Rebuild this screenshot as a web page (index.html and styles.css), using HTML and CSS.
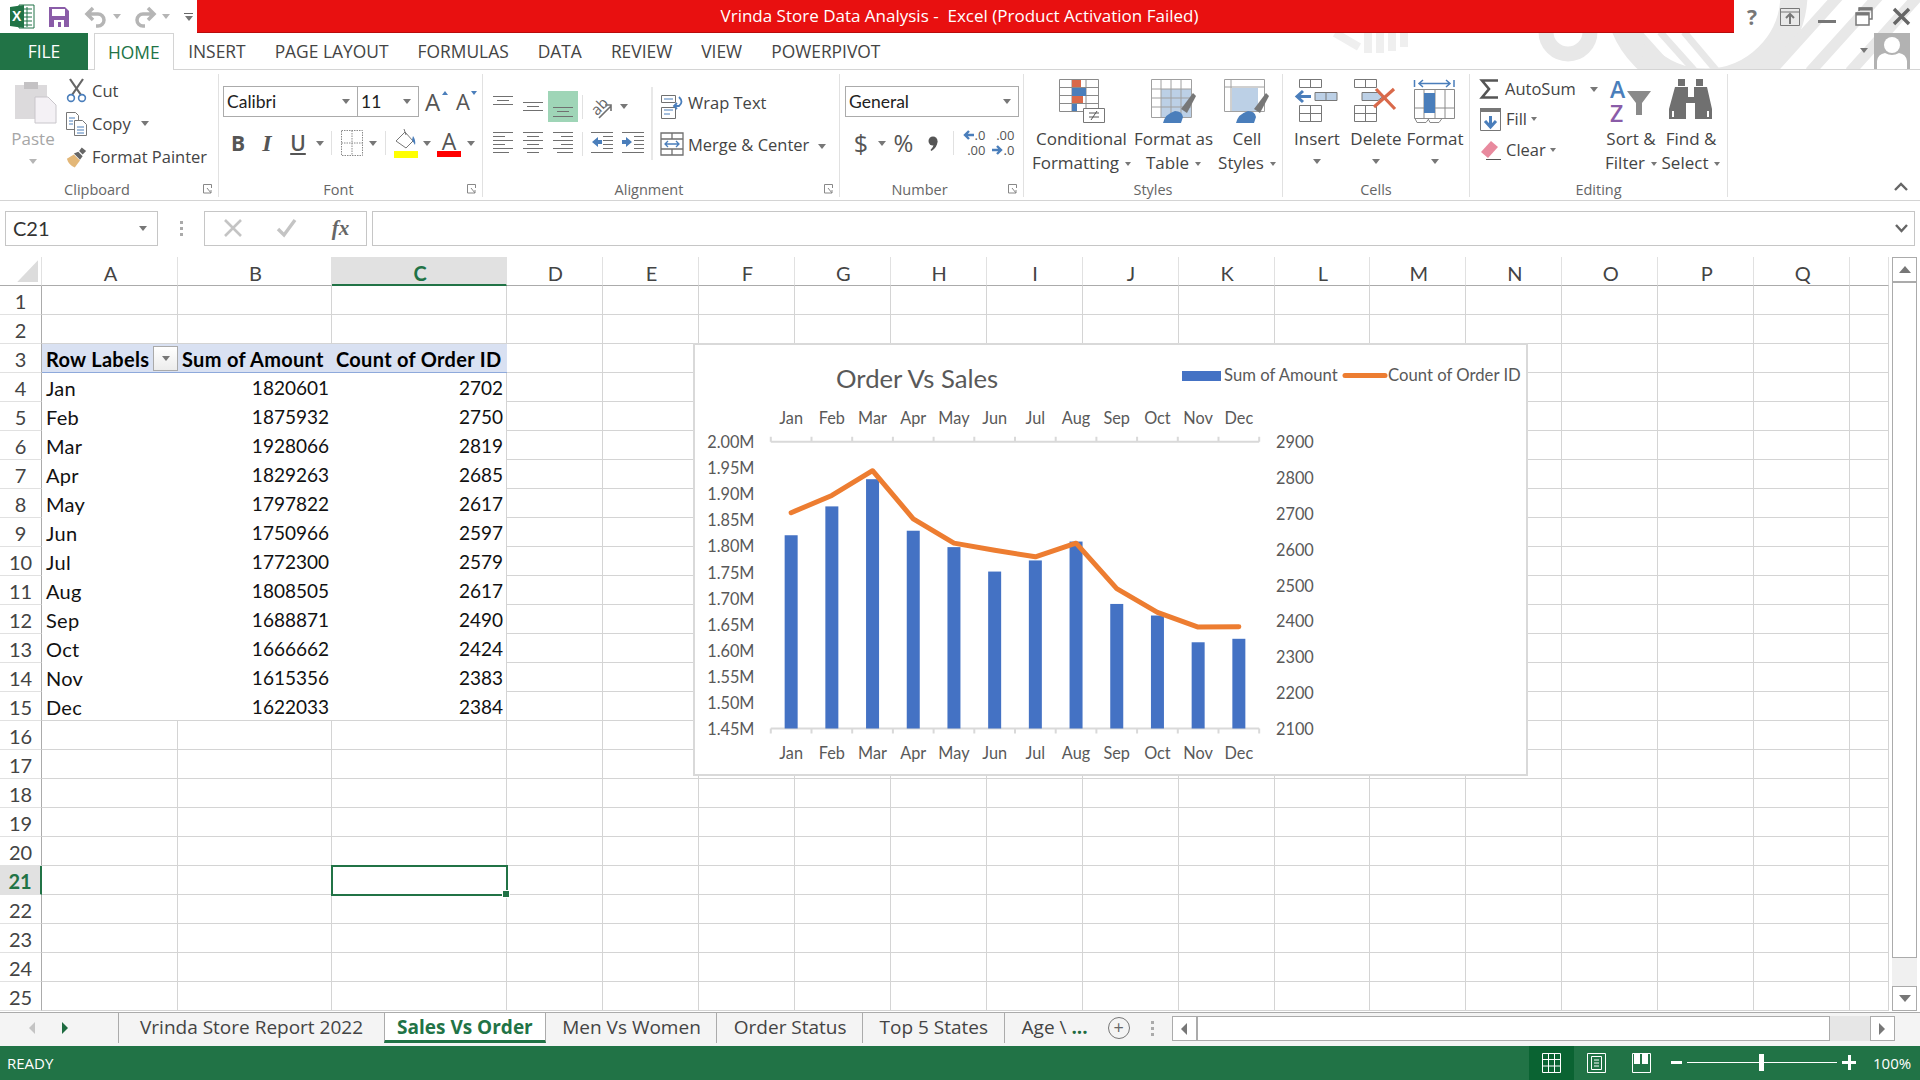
FILE: index.html
```html
<!DOCTYPE html>
<html lang="en">
<head>
    <meta charset="UTF-8">
    <meta name="viewport" content="width=device-width, initial-scale=1.0">
    <title>Vrinda Store Data Analysis - Excel</title>
    <link rel="stylesheet" href="styles.css">
</head>
<body>
    <div class="app">
        <div class="top">
            <!-- office theme pattern behind the window buttons -->
            <svg class="decor" width="590" height="69" viewBox="1330 0 590 69" fill="none" stroke="#e8e8e8">
                <path d="M1335 33l24 14M1368 33v20M1380 33v20M1392 33v18M1404 33v14" stroke="#efefef" stroke-width="8"/>
                <circle cx="1568" cy="32" r="22" stroke-width="15"/>
                <circle cx="1706" cy="-6" r="88" stroke-width="27"/>
                <path d="M1650 70l-34-38M1672 70l-34-38M1694 70l-34-38M1716 70l-32-38" stroke-width="7"/>
                <path d="M1770 72l110-122M1810 72l110-122M1850 72l70-78" stroke-width="11"/>
            </svg>

            <div class="titlebar">
                <div class="qat">
                    <svg width="25" height="25" viewBox="0 0 25 25">
                        <path d="M9 1h15v23H9z" fill="#fff" stroke="#217346"/>
                        <path d="M14 5h8M14 9h8M14 13h8M14 17h8M14 21h8M17 3v20" stroke="#217346"/>
                        <path d="M0 3l14-2v23L0 22z" fill="#217346"/>
                        <text x="2" y="17" class="xl-mark">X</text>
                    </svg>
                    <svg width="20" height="20" viewBox="0 0 20 20">
                        <path d="M0 0h16l4 4v16H0z" fill="#8a5ca8"/>
                        <path d="M3 2h13v7H3z" fill="#fff"/>
                        <path d="M5 13h10v7H5z" fill="#fff"/>
                        <path d="M9 15h3v5H9z" fill="#8a5ca8"/>
                    </svg>
                    <svg class="undo" width="22" height="20" viewBox="0 0 22 20" fill="none" stroke="#b5b5b5" stroke-width="3.5">
                        <path d="M8 1L2 7l6 6M3 7h10a6 6 0 0 1 0 12h-2"/>
                    </svg>
                    <i class="caret pale"></i>
                    <svg class="redo" width="22" height="20" viewBox="0 0 22 20" fill="none" stroke="#b5b5b5" stroke-width="3.5">
                        <path d="M14 1l6 6-6 6M19 7H9a6 6 0 0 0 0 12h2"/>
                    </svg>
                    <i class="caret pale"></i>
                    <div class="qat-more"><span></span><i class="caret"></i></div>
                </div>
                <div class="title-red">Vrinda Store Data Analysis -  Excel (Product Activation Failed)</div>
                <div class="win-buttons">
                    <span class="help">?</span>
                    <svg width="20" height="18" viewBox="0 0 20 18" fill="none" stroke="#777">
                        <path d="M.5.5h19v17H.5zM.5 4h19"/>
                        <path d="M10 16V6M6 10l4-4 4 4" stroke-width="2"/>
                    </svg>
                    <span class="win-min"></span>
                    <svg width="18" height="19" viewBox="0 0 18 19" fill="none" stroke="#777" stroke-width="1.5">
                        <path d="M4 4V1h13v11h-3"/>
                        <path d="M1 6h13v12H1z" fill="#fff"/>
                        <path d="M1 7h13M4 2h13" stroke-width="3"/>
                    </svg>
                    <svg width="17" height="17" viewBox="0 0 17 17" stroke="#666" stroke-width="3.4">
                        <path d="M1 1l15 15M16 1L1 16"/>
                    </svg>
                </div>
            </div>

            <div class="tabs">
                <div class="file-tab">FILE</div>
                <div class="tab active">HOME</div>
                <div class="tab">INSERT</div>
                <div class="tab">PAGE LAYOUT</div>
                <div class="tab">FORMULAS</div>
                <div class="tab">DATA</div>
                <div class="tab">REVIEW</div>
                <div class="tab">VIEW</div>
                <div class="tab">POWERPIVOT</div>
                <div class="user">
                    <i class="caret"></i>
                    <svg width="36" height="36" viewBox="0 0 36 36">
                        <path d="M0 0h36v36H0z" fill="#b2b2b2"/>
                        <circle cx="18" cy="12" r="8" fill="#fff"/>
                        <path d="M3 36v-8q1-7 8-8 7 4 14 0 7 1 8 8v8z" fill="#fff"/>
                    </svg>
                </div>
            </div>
        </div>

        <div class="ribbon">
            <!-- Clipboard -->
            <section class="group g-clip with-launcher">
                <div class="group-body">
                    <div class="big-btn paste">
                        <svg width="42" height="44" viewBox="0 0 42 44">
                            <path d="M0 6h32v34H0z" fill="#dcdadc"/>
                            <path d="M9 3h14v7H9z" fill="#c4c2c4"/>
                            <path d="M20 18h13l8 8v18H20z" fill="#f4f1f5" stroke="#c9c6cb"/>
                        </svg>
                        <span>Paste</span>
                        <i class="caret pale"></i>
                    </div>
                    <div class="clip-list">
                        <div class="clip-row">
                            <svg width="21" height="24" viewBox="0 0 21 24" fill="none">
                                <path d="M4 0l11 16M17 0L6 16" stroke="#666" stroke-width="2.2"/>
                                <circle cx="5" cy="19" r="3.4" stroke="#4a7ebb" stroke-width="1.6"/>
                                <circle cx="16" cy="19" r="3.4" stroke="#4a7ebb" stroke-width="1.6"/>
                            </svg>
                            <span>Cut</span>
                        </div>
                        <div class="clip-row">
                            <svg width="21" height="24" viewBox="0 0 21 24" fill="#fff" stroke="#777">
                                <path d="M.5.5h9l3 3v14H.5z"/>
                                <path d="M8.5 8.5h8l4 4v11h-12z"/>
                                <path d="M3 6h6M3 9h4M3 12h4M11 15h7M11 18h7M11 21h7" stroke="#4a7ebb"/>
                            </svg>
                            <span>Copy</span>
                            <i class="caret copy-caret"></i>
                        </div>
                        <div class="clip-row">
                            <svg width="24" height="24" viewBox="0 0 24 24">
                                <path d="M1 14l8-5 7 7-6 8q-7-3-9-10z" fill="#e3b778"/>
                                <path d="M9 8l7 7 3-4-5-5z" fill="#666"/>
                                <path d="M15 5l3-4 5 4-4 4z" fill="#666"/>
                            </svg>
                            <span>Format Painter</span>
                        </div>
                    </div>
                </div>
                <div class="group-label">Clipboard</div>
                <svg class="launcher" width="9" height="10" viewBox="0 0 9 10" fill="none" stroke="#888"><path d="M8.5 4V.5H.5v8.5H5M4 4l4 5M8 6v3H5" /></svg>
            </section>

            <!-- Font -->
            <section class="group g-font with-launcher">
                <div class="group-body stack">
                    <div class="font-top">
                        <div class="combo font-name"><span>Calibri</span><i class="caret"></i></div>
                        <div class="combo font-size"><span>11</span><i class="caret"></i></div>
                        <span class="grow-a">A<i class="mark-up"></i></span>
                        <span class="shrink-a">A<i class="mark-down"></i></span>
                    </div>
                    <div class="font-tools">
                        <b class="t-bold">B</b>
                        <em class="t-italic">I</em>
                        <u class="t-under">U</u>
                        <i class="caret"></i>
                        <i class="vsep"></i>
                        <svg width="22" height="26" viewBox="0 0 22 26" fill="none" stroke="#8a8a8a" stroke-dasharray="1.5 1">
                            <path d="M.5.5h21v25H.5zM11 .5v25M.5 13h21"/>
                        </svg>
                        <i class="caret"></i>
                        <i class="vsep"></i>
                        <svg width="24" height="30" viewBox="0 0 24 30">
                            <path d="M2 13L11 4l8 9-7 7z" fill="#fff" stroke="#777"/>
                            <path d="M10 1l2 6" stroke="#777"/>
                            <path d="M19 8q3 4 2 9l-3-5z" fill="#4a7ebb"/>
                            <path d="M0 23h24v7H0z" fill="#ffff00"/>
                        </svg>
                        <i class="caret"></i>
                        <span class="font-color">A</span>
                        <i class="caret"></i>
                    </div>
                </div>
                <div class="group-label">Font</div>
                <svg class="launcher" width="9" height="10" viewBox="0 0 9 10" fill="none" stroke="#888"><path d="M8.5 4V.5H.5v8.5H5M4 4l4 5M8 6v3H5" /></svg>
            </section>

            <!-- Alignment -->
            <section class="group g-align with-launcher">
                <div class="group-body stack">
                    <div class="align-row">
                        <svg class="al" width="20" height="31" viewBox="0 0 20 31" stroke="#707070"><path d="M0 5.5h20M4 9.5h12M0 13.5h20"/></svg>
                        <svg class="al" width="20" height="31" viewBox="0 0 20 31" stroke="#707070"><path d="M0 11.5h20M4 15.5h12M0 19.5h20"/></svg>
                        <div class="al-on"><svg width="20" height="31" viewBox="0 0 20 31" stroke="#707070"><path d="M0 16.5h20M4 20.5h12M0 25.5h20"/></svg></div>
                        <i class="vsep"></i>
                        <svg width="22" height="24" viewBox="0 0 22 24" fill="none" stroke="#707070">
                            <text x="0" y="17" class="ab-mark" transform="rotate(-45 8 12)">ab</text>
                            <path d="M8 23L20 11M14 10h6v6" stroke-width="1.6"/>
                        </svg>
                        <i class="caret"></i>
                        <span></span>
                        <i class="vsep wide"></i>
                        <svg width="23" height="24" viewBox="0 0 23 24" fill="none" stroke="#707070">
                            <path d="M.5.5h14v7H.5zM.5 12.5h14v11H.5z" fill="#fff"/>
                            <path d="M3 4h9M3 15h9M3 19h6" stroke="#4a7ebb"/>
                            <path d="M18 2q5 5 0 9h-4M16 8l-3 3 3 3" stroke="#4a7ebb" stroke-width="1.8"/>
                        </svg>
                        <span class="tool-text">Wrap Text</span>
                    </div>
                    <div class="align-row second">
                        <svg width="20" height="26" viewBox="0 0 20 26" stroke="#707070"><path d="M0 1.5h20M0 5.5h12M0 9.5h20M0 13.5h12M0 17.5h20M0 21.5h16"/></svg>
                        <svg width="20" height="26" viewBox="0 0 20 26" stroke="#707070"><path d="M0 1.5h20M4 5.5h12M0 9.5h20M4 13.5h12M0 17.5h20M4 21.5h12"/></svg>
                        <svg width="20" height="26" viewBox="0 0 20 26" stroke="#707070"><path d="M0 1.5h20M8 5.5h12M0 9.5h20M8 13.5h12M0 17.5h20M4 21.5h16"/></svg>
                        <i class="vsep"></i>
                        <svg width="22" height="26" viewBox="0 0 22 26"><path d="M0 1.5h22M12 5.5h10M12 9.5h10M12 13.5h10M12 17.5h10M0 21.5h22" stroke="#707070"/><path d="M1 11l6-5v3h4v4H7v3z" fill="#4a7ebb"/></svg>
                        <svg width="22" height="26" viewBox="0 0 22 26"><path d="M0 1.5h22M12 5.5h10M12 9.5h10M12 13.5h10M12 17.5h10M0 21.5h22" stroke="#707070"/><path d="M10 11L4 6v3H0v4h4v3z" fill="#4a7ebb"/></svg>
                        <i class="vsep wide"></i>
                        <svg width="24" height="24" viewBox="0 0 24 24" fill="none" stroke="#707070">
                            <path d="M1 1h22v22H1zM1 7h22M1 17h22M12 1v6M12 17v6" stroke-width="1.3"/>
                            <path d="M5 12h14M8 9l-3 3 3 3M16 9l3 3-3 3" stroke="#4a7ebb" stroke-width="1.3"/>
                        </svg>
                        <span class="tool-text">Merge &amp; Center<i class="caret merge-caret"></i></span>
                    </div>
                </div>
                <div class="group-label">Alignment</div>
                <svg class="launcher" width="9" height="10" viewBox="0 0 9 10" fill="none" stroke="#888"><path d="M8.5 4V.5H.5v8.5H5M4 4l4 5M8 6v3H5" /></svg>
            </section>

            <!-- Number -->
            <section class="group g-number with-launcher">
                <div class="group-body stack">
                    <div class="combo number-format"><span>General</span><i class="caret"></i></div>
                    <div class="number-tools">
                        <span class="sym dollar">$</span>
                        <i class="caret"></i>
                        <span class="sym">%</span>
                        <svg width="10" height="15" viewBox="0 0 10 15" fill="#555"><circle cx="5" cy="5" r="4.500"/><path d="M9.500 5q0 6-6 10l-1-1q3-3 3-5z"/></svg>
                        <i class="vsep"></i>
                        <div class="decimals">
                            <span><svg class="dec-arrow" width="11" height="10" viewBox="0 0 11 10" fill="none" stroke="#4a7ebb" stroke-width="2.4"><path d="M11 5H2M6 1L2 5l4 4"/></svg>.0</span>
                            <span>.00</span>
                        </div>
                        <div class="decimals">
                            <span>.00</span>
                            <span><svg class="dec-arrow" width="11" height="10" viewBox="0 0 11 10" fill="none" stroke="#4a7ebb" stroke-width="2.4"><path d="M0 5h9M5 1l4 4-4 4"/></svg>.0</span>
                        </div>
                    </div>
                </div>
                <div class="group-label">Number</div>
                <svg class="launcher" width="9" height="10" viewBox="0 0 9 10" fill="none" stroke="#888"><path d="M8.5 4V.5H.5v8.5H5M4 4l4 5M8 6v3H5" /></svg>
            </section>

            <!-- Styles -->
            <section class="group g-styles">
                <div class="group-body">
                    <div class="big-btn b-cond">
                        <svg width="46" height="44" viewBox="0 0 46 44" fill="none" stroke="#8a8a8a">
                            <path d="M.5.5h39v32H.5zM.5 8.5h39M.5 16.5h39M.5 24.5h39M13 .5v32M27 .5v32"/>
                            <path d="M13 1h9v7h-9z" fill="#d9694a" stroke="none"/>
                            <path d="M13 9h14v8H13z" fill="#4a7ebb" stroke="none"/>
                            <path d="M13 17h11v7H13z" fill="#d9694a" stroke="none"/>
                            <path d="M13 25h5v7h-5z" fill="#4a7ebb" stroke="none"/>
                            <path d="M24.5 29.5h21v14h-21z" fill="#fff" stroke="#777"/>
                            <path d="M30 34h10M30 38h10M38 32l-6 9" stroke="#555"/>
                        </svg>
                        <span>Conditional</span>
                        <span>Formatting<i class="caret small"></i></span>
                    </div>
                    <div class="big-btn b-table">
                        <svg width="46" height="44" viewBox="0 0 46 44" fill="none" stroke="#a0a0a0">
                            <path d="M.5.5h40v38H.5z" fill="#fff"/>
                            <path d="M10 10h30v28H10z" fill="#bcd0e6" stroke="none"/>
                            <path d="M.5 10h40M.5 19h40M.5 28h40M10 .5v38M20 .5v38M30 .5v38" />
                            <path d="M30 30l12-16 3 3-9 17z" fill="#777" stroke="none"/>
                            <path d="M12 44q2-9 12-12 7 0 8 6l-2 6z" fill="#4a7ebb" stroke="none"/>
                        </svg>
                        <span>Format as</span>
                        <span>Table<i class="caret small"></i></span>
                    </div>
                    <div class="big-btn b-cell">
                        <svg width="46" height="44" viewBox="0 0 46 44" fill="none" stroke="#a0a0a0">
                            <path d="M.5.5h40v32H.5zM.5 8h40M7 .5v32" fill="#fff"/>
                            <path d="M8 9h26v23H8z" fill="#bcd0e6" stroke="none"/>
                            <path d="M30 30l12-16 3 3-9 17z" fill="#777" stroke="none"/>
                            <path d="M12 44q2-9 12-12 7 0 8 6l-2 6z" fill="#4a7ebb" stroke="none"/>
                        </svg>
                        <span>Cell</span>
                        <span>Styles<i class="caret small"></i></span>
                    </div>
                </div>
                <div class="group-label">Styles</div>
            </section>

            <!-- Cells -->
            <section class="group g-cells">
                <div class="group-body">
                    <div class="big-btn b-insert">
                        <svg width="44" height="44" viewBox="0 0 44 44" fill="none" stroke="#777">
                            <path d="M4.500.5h22v8h-22zM15.500.5v8M4.500 26.500h22v16h-22zM4.500 34.500h22M15.500 26.500v16"/>
                            <path d="M20 13.500h22v8H20z" fill="#bcd0e6"/><path d="M31 13.500v8"/>
                            <path d="M16 17.500H3M8 12l-6 5.500 6 5.500" stroke="#4a7ebb" stroke-width="3"/>
                        </svg>
                        <span>Insert</span>
                        <i class="caret"></i>
                    </div>
                    <div class="big-btn b-delete">
                        <svg width="44" height="44" viewBox="0 0 44 44" fill="none" stroke="#777">
                            <path d="M.5.5h22v8H.5zM11.500.500v8M.5 26.500h22v16H.5zM.5 34.500h22M11.500 26.500v16"/>
                            <path d="M8 13.500h16l5 4-5 4H8z" fill="#bcd0e6"/>
                            <path d="M20 28L40 10M22 10l19 20" stroke="#d9694a" stroke-width="3.2"/>
                        </svg>
                        <span>Delete</span>
                        <i class="caret"></i>
                    </div>
                    <div class="big-btn b-format">
                        <svg width="42" height="44" viewBox="0 0 42 44" fill="none" stroke="#8a8a8a">
                            <path d="M.5 10.500h40v29H.5zM.5 29h40M10 10.500v29M21 10.500v29M31 10.500v29"/>
                            <path d="M10 14h11v20H10z" fill="#4a7ebb" stroke="none"/>
                            <path d="M1 39.500l2 4h9l3-4M14 39.500l2 4h9l3-4"/>
                            <path d="M.5 1v7M40 1v7M5 4.500h31M9 1L5 4.500 9 8M32 1l4 3.500L32 8" stroke="#4a7ebb" stroke-width="1.500"/>
                        </svg>
                        <span>Format</span>
                        <i class="caret"></i>
                    </div>
                </div>
                <div class="group-label">Cells</div>
            </section>

            <!-- Editing -->
            <section class="group g-edit">
                <div class="group-body">
                    <div class="edit-list">
                        <div class="edit-row r-sum">
                            <svg width="18" height="20" viewBox="0 0 18 20" fill="none" stroke="#555" stroke-width="2.6"><path d="M18 1.500H2L9 10l-7 8.500h16"/></svg>
                            <span>AutoSum</span><i class="caret auto-caret"></i>
                        </div>
                        <div class="edit-row r-fill">
                            <svg width="21" height="23" viewBox="0 0 21 23" fill="#fff" stroke="#777">
                                <path d="M.5.500h20v22H.5z"/>
                                <path d="M0 0h21v4H0z" fill="#777" stroke="none"/>
                                <path d="M10.500 8v11M5 13l5.500 6 5.500-6" fill="none" stroke="#4a7ebb" stroke-width="3"/>
                            </svg>
                            <span>Fill</span><i class="caret small"></i>
                        </div>
                        <div class="edit-row r-clear">
                            <svg width="21" height="20" viewBox="0 0 21 20">
                                <path d="M1 12L11 1l7 6-10 11z" fill="#e88a9e"/>
                                <path d="M6 19.500h15" stroke="#555"/>
                            </svg>
                            <span>Clear</span><i class="caret small"></i>
                        </div>
                    </div>
                    <div class="big-btn b-sort">
                        <svg width="44" height="44" viewBox="0 0 44 44">
                            <text x="1" y="19" class="az a">A</text>
                            <text x="1" y="43" class="az z">Z</text>
                            <path d="M18 12h24L33 24v12h-6V24z" fill="#8a8a8a"/>
                        </svg>
                        <span>Sort &amp;</span>
                        <span>Filter<i class="caret small"></i></span>
                    </div>
                    <div class="big-btn b-find">
                        <svg width="44" height="44" viewBox="0 0 44 44" fill="#707070">
                            <path d="M9 0h7v7H9zM27 0h7v7h-7z"/>
                            <path d="M6 8h13v10h6V8h13l5 22v10H26V24h-9v16H0V30z"/>
                            <path d="M3 32h2v6H3zM38 32h2v6h-2z" fill="#fff"/>
                        </svg>
                        <span>Find &amp;</span>
                        <span>Select<i class="caret small"></i></span>
                    </div>
                </div>
                <div class="group-label">Editing</div>
            </section>

            <div class="ribbon-end">
                <svg width="14" height="9" viewBox="0 0 14 9" fill="none" stroke="#666" stroke-width="2.4"><path d="M1 8l6-6 6 6"/></svg>
            </div>
        </div>

        <div class="formula-bar">
            <div class="name-box"><span>C21</span><i class="caret"></i></div>
            <div class="fb-dots"><i></i><i></i><i></i></div>
            <div class="fb-buttons">
                <svg width="18" height="18" viewBox="0 0 18 18" stroke="#c4c4c4" stroke-width="2.6"><path d="M1 1l16 16M17 1L1 17"/></svg>
                <svg width="20" height="18" viewBox="0 0 20 18" fill="none" stroke="#c4c4c4" stroke-width="3.4"><path d="M1 10l6 6L18 1"/></svg>
                <span class="fx">fx</span>
            </div>
            <div class="fb-input">
                <svg width="13" height="9" viewBox="0 0 13 9" fill="none" stroke="#666" stroke-width="2.4"><path d="M1 1l5.500 6L12 1"/></svg>
            </div>
        </div>

        <div class="sheet">
            <div class="grid" id="grid"></div>
            <div class="vscroll">
                <div class="sb-btn"><i class="tri up"></i></div>
                <div class="sb-thumb"></div>
                <div class="sb-track"></div>
                <div class="sb-btn"><i class="tri down"></i></div>
            </div>
            <div class="chart" id="chart"></div>
        </div>

        <div class="sheet-tabs">
            <div class="tab-nav">
                <i class="tri left off"></i>
                <i class="tri right on"></i>
            </div>
            <div class="sheet-tab first">Vrinda Store Report 2022</div>
            <div class="sheet-tab current">Sales Vs Order</div>
            <div class="sheet-tab">Men Vs Women</div>
            <div class="sheet-tab">Order Status</div>
            <div class="sheet-tab">Top 5 States</div>
            <div class="sheet-tab last">Age \ <b>...</b></div>
            <div class="add-sheet">+</div>
            <div class="fb-dots tabs-dots"><i></i><i></i><i></i></div>
            <div class="hscroll">
                <div class="sb-btn h"><i class="tri left"></i></div>
                <div class="hs-thumb"></div>
                <div class="hs-track"></div>
                <div class="sb-btn h"><i class="tri right"></i></div>
            </div>
        </div>

        <div class="statusbar">
            <span class="ready">READY</span>
            <div class="view-btn on">
                <svg width="19" height="20" viewBox="0 0 19 20" fill="none" stroke="#fff"><path d="M.5.500h18v19H.5zM.5 6.500h18M.5 13h18M6.500.500v19M12.500.500v19"/></svg>
            </div>
            <div class="view-btn">
                <svg width="19" height="20" viewBox="0 0 19 20" fill="none" stroke="#fff"><path d="M.5.500h18v19H.5zM4.500 3.500h10v13h-10zM7 7h5M7 10h5M7 13h5"/></svg>
            </div>
            <div class="view-btn">
                <svg width="19" height="20" viewBox="0 0 19 20" fill="none" stroke="#fff"><path d="M.5.500h18v19H.5z"/><path d="M2 1h6v10H2zM10 1h6v10h-6z" fill="#fff" stroke="none"/></svg>
            </div>
            <div class="zoom">
                <span class="zoom-minus"></span>
                <div class="zoom-track"><i></i></div>
                <span class="zoom-plus"></span>
            </div>
            <span class="zoom-val">100%</span>
        </div>
    </div>

    <script src="script.js"></script>
</body>
</html>
```

FILE: styles.css
```css
* {
    box-sizing: border-box;
}

body {
    margin: 0;
    background: #fff;
    font-family: "Open Sans", sans-serif;
    color: #444;
    overflow: hidden;
}

svg {
    overflow: visible;
}

.app {
    width: 1920px;
    height: 1080px;
    display: flex;
    flex-direction: column;
}

.caret {
    display: inline-block;
    width: 0;
    height: 0;
    border-left: 4.5px solid transparent;
    border-right: 4.5px solid transparent;
    border-top: 5px solid #777;
}

.caret.pale {
    border-top-color: #b5b5b5;
}

.caret.small {
    border-left-width: 3.5px;
    border-right-width: 3.5px;
    border-top-width: 4px;
    margin-left: 6px;
    vertical-align: middle;
}

/* title bar */
.top {
    position: relative;
    height: 70px;
}

.decor {
    position: absolute;
    right: 0;
    top: 0;
    overflow: hidden;
}

.titlebar {
    position: relative;
    display: flex;
    height: 33px;
}

.qat {
    width: 197px;
    background: #fff;
    display: flex;
    align-items: center;
    padding-left: 10px;
}

.xl-mark {
    font: bold 14px "Liberation Sans", sans-serif;
    fill: #fff;
}

.qat svg:nth-child(2) {
    margin-left: 14px;
}

.undo {
    margin-left: 16px;
}

.redo {
    margin-left: 13px;
}

.qat .caret {
    margin-left: 6px;
}

.qat-more {
    margin-left: 14px;
    display: flex;
    flex-direction: column;
    gap: 2px;
    align-items: center;
}

.qat-more span {
    width: 9px;
    height: 1px;
    background: #666;
}

.qat-more .caret {
    margin: 0;
}

.title-red {
    width: 1537px;
    background: #e81010;
    border-bottom: 1px solid #b80c0c;
    color: #fff;
    font-size: 17px;
    line-height: 32px;
    text-align: center;
    white-space: pre;
    padding-right: 12px;
}

.win-buttons {
    flex: 1;
    display: flex;
    align-items: center;
    position: relative;
}

.help {
    position: relative;
    margin-left: 13px;
    width: 13px;
    font: bold 21px "Open Sans", sans-serif;
    color: #777;
}

.win-buttons svg:nth-child(2) {
    margin-left: 20px;
}

.win-min {
    width: 18px;
    height: 3px;
    background: #777;
    margin: 10px 0 0 18px;
}

.win-buttons svg:nth-child(4) {
    margin-left: 19px;
}

.win-buttons svg:nth-child(5) {
    margin-left: 20px;
}

/* tabs */
.tabs {
    position: relative;
    display: flex;
    height: 37px;
    border-bottom: 1px solid #d4d4d4;
    font-size: 17.4px;
    line-height: 36px;
}

.file-tab {
    width: 88px;
    height: 37px;
    background: #217346;
    color: #fff;
    text-align: center;
    margin-right: 6px;
}

.tab {
    padding: 0 14.5px;
    color: #444;
    background: transparent;
}

.tab.active {
    height: 37px;
    color: #217346;
    background: #fff;
    border: 1px solid #d4d4d4;
    border-bottom: none;
    padding: 0 13px;
}

.user {
    position: absolute;
    right: 10px;
    top: 0;
    display: flex;
    align-items: flex-start;
}

.user .caret {
    margin: 15px 6px 0 0;
}

/* ribbon */
.ribbon {
    display: flex;
    height: 132px;
    border-bottom: 1px solid #d4d4d4;
    padding-top: 4px;
    font-size: 16.5px;
    color: #444;
}

.group {
    position: relative;
    display: flex;
    flex-direction: column;
    height: 123px;
    border-right: 1px solid #e1e1e1;
}

.group-body {
    display: flex;
    height: 104px;
}

.group-body.stack {
    flex-direction: column;
}

.group-label {
    text-align: center;
    font-size: 14.5px;
    line-height: 23px;
    color: #666;
    height: 19px;
}

.with-launcher .group-label {
    padding-right: 24px;
}

.launcher {
    position: absolute;
    right: 6px;
    bottom: 3px;
}

.g-clip { width: 219px; }
.g-font { width: 264px; }
.g-align { width: 357px; }
.g-number { width: 184px; }
.g-styles { width: 259px; }
.g-cells { width: 187px; }
.g-edit { width: 258px; }

.g-clip .group-body { padding-left: 15px; }
.g-font .group-body { padding-left: 4px; }
.g-align .group-body { padding-left: 5px; }
.g-number .group-body { padding-left: 5px; }
.g-styles .group-body { padding-left: 6px; }
.g-cells .group-body { padding-left: 6px; }
.g-edit .group-body { padding-left: 10px; }

.big-btn {
    display: flex;
    flex-direction: column;
    align-items: center;
    padding-top: 5px;
    line-height: 24px;
    white-space: nowrap;
    font-size: 17px;
}

.big-btn svg {
    margin-bottom: 4px;
    flex: none;
}

.big-btn > .caret {
    margin-top: 8px;
}

.paste {
    width: 42px;
    color: #a6a6a6;
}

.paste span, .paste .caret {
    margin-right: 6px;
}

.clip-list {
    margin-left: 9px;
    display: flex;
    flex-direction: column;
}

.clip-row {
    height: 33px;
    display: flex;
    align-items: center;
    gap: 5px;
    white-space: nowrap;
    width: 150px;
}

.clip-row svg {
    width: 21px;
}

.copy-caret {
    margin-left: 5px;
}

.combo {
    height: 31px;
    border: 1px solid #ababab;
    display: flex;
    align-items: center;
    justify-content: space-between;
    padding: 0 7px 0 3px;
    font: 17.5px "Lato", sans-serif;
    color: #222;
    background: #fff;
}

.font-top {
    display: flex;
    margin-top: 12px;
    height: 31px;
    align-items: center;
}

.font-name {
    width: 135px;
}

.font-size {
    width: 62px;
    margin-left: -1px;
}

.grow-a, .shrink-a {
    position: relative;
    font-size: 24px;
    line-height: 31px;
    color: #555;
}

.grow-a {
    margin-left: 6px;
    width: 31px;
}

.shrink-a {
    font-size: 22px;
}

.mark-up, .mark-down {
    position: absolute;
    top: 5px;
    left: 17px;
    width: 0;
    height: 0;
    border-left: 3.5px solid transparent;
    border-right: 3.5px solid transparent;
}

.mark-up {
    border-bottom: 4px solid #4a7ebb;
}

.mark-down {
    left: 15px;
    border-top: 4px solid #4a7ebb;
}

.font-tools {
    margin: 11px 0 0 3px;
    height: 30px;
    display: grid;
    grid-template-columns: 26px 30px 32px 12px 10px 31px 12px 12px 30px 12px 32px 12px;
    justify-items: center;
    align-items: center;
}

.t-bold, .t-italic, .t-under {
    font-size: 21px;
    color: #555;
    font-family: "Open Sans", sans-serif;
}

.t-bold {
    margin-right: 2px;
}

.t-italic {
    font-family: "Liberation Serif", serif;
    font-size: 24px;
    font-weight: 700;
}

.t-under {
    font-weight: 600;
}

.font-color {
    display: block;
    width: 24px;
    height: 28px;
    text-align: center;
    font-size: 23px;
    line-height: 24px;
    color: #555;
    border-bottom: 6px solid #f00;
}

.vsep {
    display: block;
    width: 1px;
    height: 24px;
    background: #e1e1e1;
}

.align-row {
    display: grid;
    grid-template-columns: 30px 30px 30px 8px 32px 12px 18px 8px 32px auto;
    justify-items: center;
    align-items: center;
    height: 31px;
    margin-top: 11px;
}

.align-row.second {
    grid-template-columns: 30px 30px 30px 8px 32px 30px 8px 32px auto;
    margin-top: 12px;
    height: 30px;
}

.vsep.wide {
    width: 2px;
    height: 41px;
    background: #e8e8e8;
    align-self: start;
    margin-top: 2px;
}

.second .vsep.wide {
    height: 32px;
    margin-top: 0;
}

.align-row .tool-text {
    justify-self: start;
    white-space: nowrap;
    margin-top: -8px;
}

.align-row.second .tool-text {
    margin-top: 0;
}

.al-on {
    width: 30px;
    height: 31px;
    background: #9fd5b7;
    display: flex;
    justify-content: center;
}

.ab-mark {
    font: 15px "Open Sans", sans-serif;
    fill: #666;
    stroke: none;
}

.merge-caret {
    margin-left: 9px;
    vertical-align: middle;
}

.number-format {
    width: 174px;
    margin-top: 12px;
}

.number-tools {
    margin-top: 11px;
    height: 30px;
    display: grid;
    grid-template-columns: 32px 10px 33px 26px 14px 28px 30px;
    justify-items: center;
    align-items: center;
}

.sym {
    font-size: 24px;
    color: #555;
    line-height: 30px;
}

.dollar {
    font-size: 25px;
}

.decimals {
    display: flex;
    flex-direction: column;
    font-size: 13px;
    line-height: 15px;
    color: #555;
    text-align: right;
}

.dec-arrow {
    margin-right: 1px;
}

.b-cond { width: 103px; }
.b-table { width: 81px; }
.b-cell { width: 66px; }
.b-insert { width: 56px; }
.b-delete { width: 62px; }
.b-format { width: 56px; }

.edit-list {
    width: 120px;
    display: flex;
    flex-direction: column;
}

.edit-row {
    display: flex;
    align-items: center;
    gap: 7px;
    white-space: nowrap;
}

.edit-row span {
    margin-top: -2px;
}

.r-sum { height: 30px; }
.r-fill { height: 30px; gap: 5px; }
.r-clear { height: 32px; gap: 5px; }

.edit-row .caret.small {
    margin-left: -1px;
}

.auto-caret {
    margin-left: 7px;
}

.b-sort { width: 62px; }
.b-find { width: 58px; }

.az {
    font: 600 23px "Open Sans", sans-serif;
}

.az.a { fill: #4a7ebb; }
.az.z { fill: #8a5ca8; }

.ribbon-end {
    flex: 1;
    display: flex;
    align-items: flex-end;
    justify-content: flex-end;
    padding: 0 12px 9px 0;
}

/* formula bar */
.formula-bar {
    display: flex;
    height: 46px;
    padding-top: 10px;
    padding-left: 5px;
}

.name-box {
    width: 153px;
    height: 35px;
    border: 1px solid #c6c6c6;
    display: flex;
    align-items: center;
    justify-content: space-between;
    padding: 0 10px 0 7px;
    font: 20px "Lato", sans-serif;
    color: #333;
}

.fb-dots {
    width: 46px;
    display: flex;
    flex-direction: column;
    align-items: center;
    justify-content: center;
    gap: 3px;
}

.fb-dots i {
    width: 3px;
    height: 3px;
    background: #aaa;
}

.fb-buttons {
    width: 163px;
    height: 35px;
    border: 1px solid #c6c6c6;
    display: grid;
    grid-template-columns: 55px 54px 53px;
    align-items: center;
    justify-items: center;
    padding-left: 0;
}

.fx {
    font: italic bold 21px "Liberation Serif", serif;
    color: #666;
}

.fb-input {
    width: 1543px;
    height: 35px;
    margin-left: 5px;
    border: 1px solid #c6c6c6;
    border-right-color: #c6c6c6;
    display: flex;
    align-items: center;
    justify-content: flex-end;
    padding-right: 6px;
}

/* sheet */
.sheet {
    position: relative;
    display: flex;
    height: 755px;
    margin-top: 11px;
}

.grid {
    width: 1889px;
    height: 755px;
    overflow: hidden;
    display: grid;
    grid-template-columns: 42px 136px 154px 175px repeat(14, 95.95px) 39px;
    grid-template-rows: 29px repeat(25, 29px);
    font: 20px "Lato", sans-serif;
    color: #111;
}

.cell {
    border-right: 1px solid #d4d4d4;
    border-bottom: 1px solid #d4d4d4;
    padding: 0 3px 0 4px;
    line-height: 30px;
    white-space: nowrap;
    overflow: hidden;
    letter-spacing: .3px;
}

.cell.num {
    text-align: right;
    font-size: 19px;
    letter-spacing: 0;
}

.col-head {
    border-right: 1px solid #e1e1e1;
    border-bottom: 1px solid #ababab;
    text-align: center;
    color: #444;
    line-height: 32px;
    padding-left: 2px;
}

.col-head.sel {
    background: #e1e1e1;
    color: #217346;
    font-weight: 700;
    border-bottom: 2px solid #217346;
}

.corner {
    position: relative;
    border-right: 1px solid #e1e1e1;
    border-bottom: 1px solid #ababab;
}

.corner::after {
    content: "";
    position: absolute;
    right: 3px;
    bottom: 3px;
    width: 21px;
    height: 22px;
    background: #dcdcdc;
    clip-path: polygon(100% 0, 100% 100%, 0 100%);
}

.row-head {
    border-right: 1px solid #ababab;
    border-bottom: 1px solid #e1e1e1;
    text-align: center;
    color: #444;
    line-height: 30px;
}

.row-head.sel {
    background: #e1e1e1;
    color: #217346;
    font-weight: 700;
    border-right: 2px solid #217346;
}

.pivot-head {
    position: relative;
    background: #d9e1f2;
    border-right: none;
    border-bottom: 1px solid #8ea9db;
    font-weight: 700;
    color: #000;
}

.pivot-row {
    border-right: none;
    border-bottom: none;
}

.pivot-last {
    border-bottom: 1px solid #d4d4d4;
}

.pivot-end {
    border-right: 1px solid #d4d4d4;
}

.filter-btn {
    position: absolute;
    right: 0;
    top: 2px;
    width: 25px;
    height: 25px;
    border: 1px solid #aaa;
    background: linear-gradient(#fff, #ececec);
    display: flex;
    align-items: center;
    justify-content: center;
}

.cell.selected {
    position: relative;
    overflow: visible;
    outline: 2px solid #217346;
    outline-offset: -1px;
    z-index: 2;
}

.cell.selected::after {
    content: "";
    position: absolute;
    right: -4px;
    bottom: -4px;
    width: 6px;
    height: 6px;
    background: #217346;
    border: 1px solid #fff;
}

.chart {
    position: absolute;
    left: 693px;
    top: 86px;
    width: 835px;
    height: 433px;
    background: #fff;
    border: 2px solid #d9d9d9;
    z-index: 3;
}

.chart svg {
    display: block;
}

.chart text {
    font-family: "Lato", sans-serif;
    font-size: 16.3px;
    fill: #595959;
}

.chart .legend-text {
    font-size: 16.7px;
}

.chart .chart-title {
    font-size: 25.7px;
}

.vscroll {
    width: 25px;
    margin-left: 3px;
    height: 754px;
    display: flex;
    flex-direction: column;
}

.sb-btn {
    height: 25px;
    border: 1px solid #ababab;
    background: #fff;
    display: flex;
    align-items: center;
    justify-content: center;
    flex: none;
}

.sb-thumb {
    height: 676px;
    border: 1px solid #ababab;
    background: #fff;
}

.sb-track {
    flex: 1;
    background: #f0f0f0;
}

.tri {
    display: block;
    width: 0;
    height: 0;
}

.tri.up {
    border-left: 6px solid transparent;
    border-right: 6px solid transparent;
    border-bottom: 7px solid #777;
}

.tri.down {
    border-left: 6px solid transparent;
    border-right: 6px solid transparent;
    border-top: 7px solid #777;
}

.tri.left {
    border-top: 6px solid transparent;
    border-bottom: 6px solid transparent;
    border-right: 6px solid #777;
}

.tri.right {
    border-top: 6px solid transparent;
    border-bottom: 6px solid transparent;
    border-left: 6px solid #777;
}

.tri.left.off {
    border-right-color: #c4c4c4;
}

.tri.right.on {
    border-left-color: #1e6b40;
}

/* sheet tabs */
.sheet-tabs {
    display: flex;
    height: 34px;
    background: #f4f4f4;
    border-top: 1px solid #ababab;
    font-size: 19px;
    color: #444;
}

.tab-nav {
    width: 118px;
    height: 30px;
    display: flex;
    align-items: center;
    gap: 27px;
    padding-left: 29px;
}

.sheet-tab {
    height: 30px;
    line-height: 28px;
    padding: 0 15.5px 0 16.5px;
    border-left: 1px solid #ababab;
    white-space: nowrap;
}

.sheet-tab.first {
    padding: 0 21px;
}

.sheet-tab.current {
    background: #fff;
    color: #217346;
    font-weight: 700;
    border-left: 1px solid #ababab;
    border-right: 1px solid #ababab;
    border-bottom: 3px solid #217346;
    padding: 0 12px;
    height: 30px;
}

.sheet-tab.current + .sheet-tab {
    border-left: none;
}

.sheet-tab.last {
    width: 104px;
    padding: 0 0 0 17px;
}

.sheet-tab.last b {
    color: #1e6b40;
    font-weight: 700;
}

.add-sheet {
    width: 22px;
    height: 22px;
    margin-top: 4px;
    border: 1.5px solid #777;
    border-radius: 50%;
    text-align: center;
    font-size: 18px;
    line-height: 18px;
    color: #666;
    flex: none;
}

.tabs-dots {
    width: 42px;
    height: 30px;
    padding-left: 4px;
    flex: none;
}

.hscroll {
    width: 723px;
    height: 25px;
    margin-top: 3px;
    display: flex;
    flex: none;
}

.sb-btn.h {
    width: 25px;
    height: 25px;
}

.hs-thumb {
    width: 633px;
    border: 1px solid #ababab;
    background: #fff;
}

.hs-track {
    width: 40px;
    background: #e6e6e6;
}

/* status bar */
.statusbar {
    flex: 1;
    background: #217346;
    color: #fff;
    display: flex;
    align-items: center;
    font-size: 15px;
    padding-left: 7px;
}

.ready {
    width: 1522px;
}

.view-btn {
    width: 45px;
    height: 34px;
    display: flex;
    align-items: center;
    justify-content: center;
}

.view-btn.on {
    background: #0a6332;
}

.zoom {
    margin-left: 7px;
    display: flex;
    align-items: center;
    gap: 5px;
}

.zoom-minus {
    width: 11px;
    height: 3px;
    background: #fff;
}

.zoom-track {
    position: relative;
    width: 150px;
    height: 1px;
    background: #fff;
}

.zoom-track i {
    position: absolute;
    left: 72px;
    top: -8px;
    width: 5px;
    height: 17px;
    background: #fff;
}

.zoom-plus {
    position: relative;
    width: 14px;
    height: 3px;
    background: #fff;
}

.zoom-plus::after {
    content: "";
    position: absolute;
    left: 5.5px;
    top: -6px;
    width: 3px;
    height: 15px;
    background: #fff;
}

.zoom-val {
    margin-left: 17px;
}
```

FILE: script.js
```js
// Pivot table data
const months = ['Jan', 'Feb', 'Mar', 'Apr', 'May', 'Jun', 'Jul', 'Aug', 'Sep', 'Oct', 'Nov', 'Dec'];
const amounts = [1820601, 1875932, 1928066, 1829263, 1797822, 1750966, 1772300, 1808505, 1688871, 1666662, 1615356, 1622033];
const orders = [2702, 2750, 2819, 2685, 2617, 2597, 2579, 2617, 2490, 2424, 2383, 2384];
const columns = 'ABCDEFGHIJKLMNOPQR'.split('');

// Build the worksheet cells
function buildGrid() {
    let html = '<div class="corner"></div>';
    columns.forEach(col => {
        html += `<div class="col-head${col === 'C' ? ' sel' : ''}">${col === 'R' ? '' : col}</div>`;
    });

    for (let row = 1; row <= 25; row++) {
        html += `<div class="row-head${row === 21 ? ' sel' : ''}">${row}</div>`;
        columns.forEach((col, c) => {
            let cls = 'cell';
            let text = '';
            if (c < 3 && row === 3) {
                cls += ' pivot-head';
                text = ['Row Labels', 'Sum of Amount', 'Count of Order ID'][c];
                if (c === 0) {
                    text += '<span class="filter-btn"><i class="caret"></i></span>';
                }
            } else if (c < 3 && row > 3 && row <= 15) {
                cls += ' pivot-row';
                if (row === 15) cls += ' pivot-last';
                if (c === 2) cls += ' pivot-end';
                if (c > 0) cls += ' num';
                text = [months, amounts, orders][c][row - 4];
            }
            if (row === 21 && col === 'C') cls += ' selected';
            html += `<div class="${cls}">${text}</div>`;
        });
    }
    document.getElementById('grid').innerHTML = html;
}

// Draw the combo chart, coordinates are page pixels
function buildChart() {
    const left = 770.8, right = 1259.2, top = 441.7, bottom = 728.5;
    const step = (right - left) / 12;
    const yAmount = v => bottom - (v - 1450000) / 550000 * (bottom - top);
    const yOrder = v => bottom - (v - 2100) / 800 * (bottom - top);
    const xMid = i => left + step * (i + 0.5);

    let svg = '<svg width="831" height="429"><g transform="translate(-695 -345)">';
    svg += '<text class="chart-title" x="836" y="388">Order Vs Sales</text>';

    // legend
    svg += '<rect x="1182" y="371" width="39" height="10" fill="#4472c4"/>';
    svg += '<text class="legend-text" x="1224" y="381">Sum of Amount</text>';
    svg += '<path d="M1345 375.500h40" stroke="#ed7d31" stroke-width="5" stroke-linecap="round"/>';
    svg += '<text class="legend-text" x="1388" y="381">Count of Order ID</text>';

    // axes
    let axis = `M${left} ${top}H${right}M${left} ${bottom}H${right}`;
    for (let i = 0; i <= 12; i++) {
        const x = left + step * i;
        axis += `M${x} ${top}v-5M${x} ${bottom}v5`;
    }
    svg += `<path d="${axis}" fill="none" stroke="#d9d9d9" stroke-width="2"/>`;

    // bars
    amounts.forEach((v, i) => {
        const y = yAmount(v);
        svg += `<rect x="${xMid(i) - 6.5}" y="${y}" width="13" height="${bottom - y}" fill="#4472c4"/>`;
    });

    // line
    const points = orders.map((v, i) => `${xMid(i)},${yOrder(v)}`).join(' ');
    svg += `<polyline points="${points}" fill="none" stroke="#ed7d31" stroke-width="5" stroke-linecap="round" stroke-linejoin="round"/>`;

    // labels
    months.forEach((m, i) => {
        svg += `<text x="${xMid(i)}" y="423.500" text-anchor="middle">${m}</text>`;
        svg += `<text x="${xMid(i)}" y="758.500" text-anchor="middle">${m}</text>`;
    });
    for (let k = 0; k < 12; k++) {
        const label = (2 - k * 0.05).toFixed(2) + 'M';
        svg += `<text x="754.500" y="${top + k * (bottom - top) / 11 + 6.500}" text-anchor="end">${label}</text>`;
    }
    for (let k = 0; k < 9; k++) {
        svg += `<text x="1276" y="${top + k * (bottom - top) / 8 + 6.500}">${2900 - k * 100}</text>`;
    }
    svg += '</g></svg>';
    document.getElementById('chart').innerHTML = svg;
}

buildGrid();
buildChart();
```
